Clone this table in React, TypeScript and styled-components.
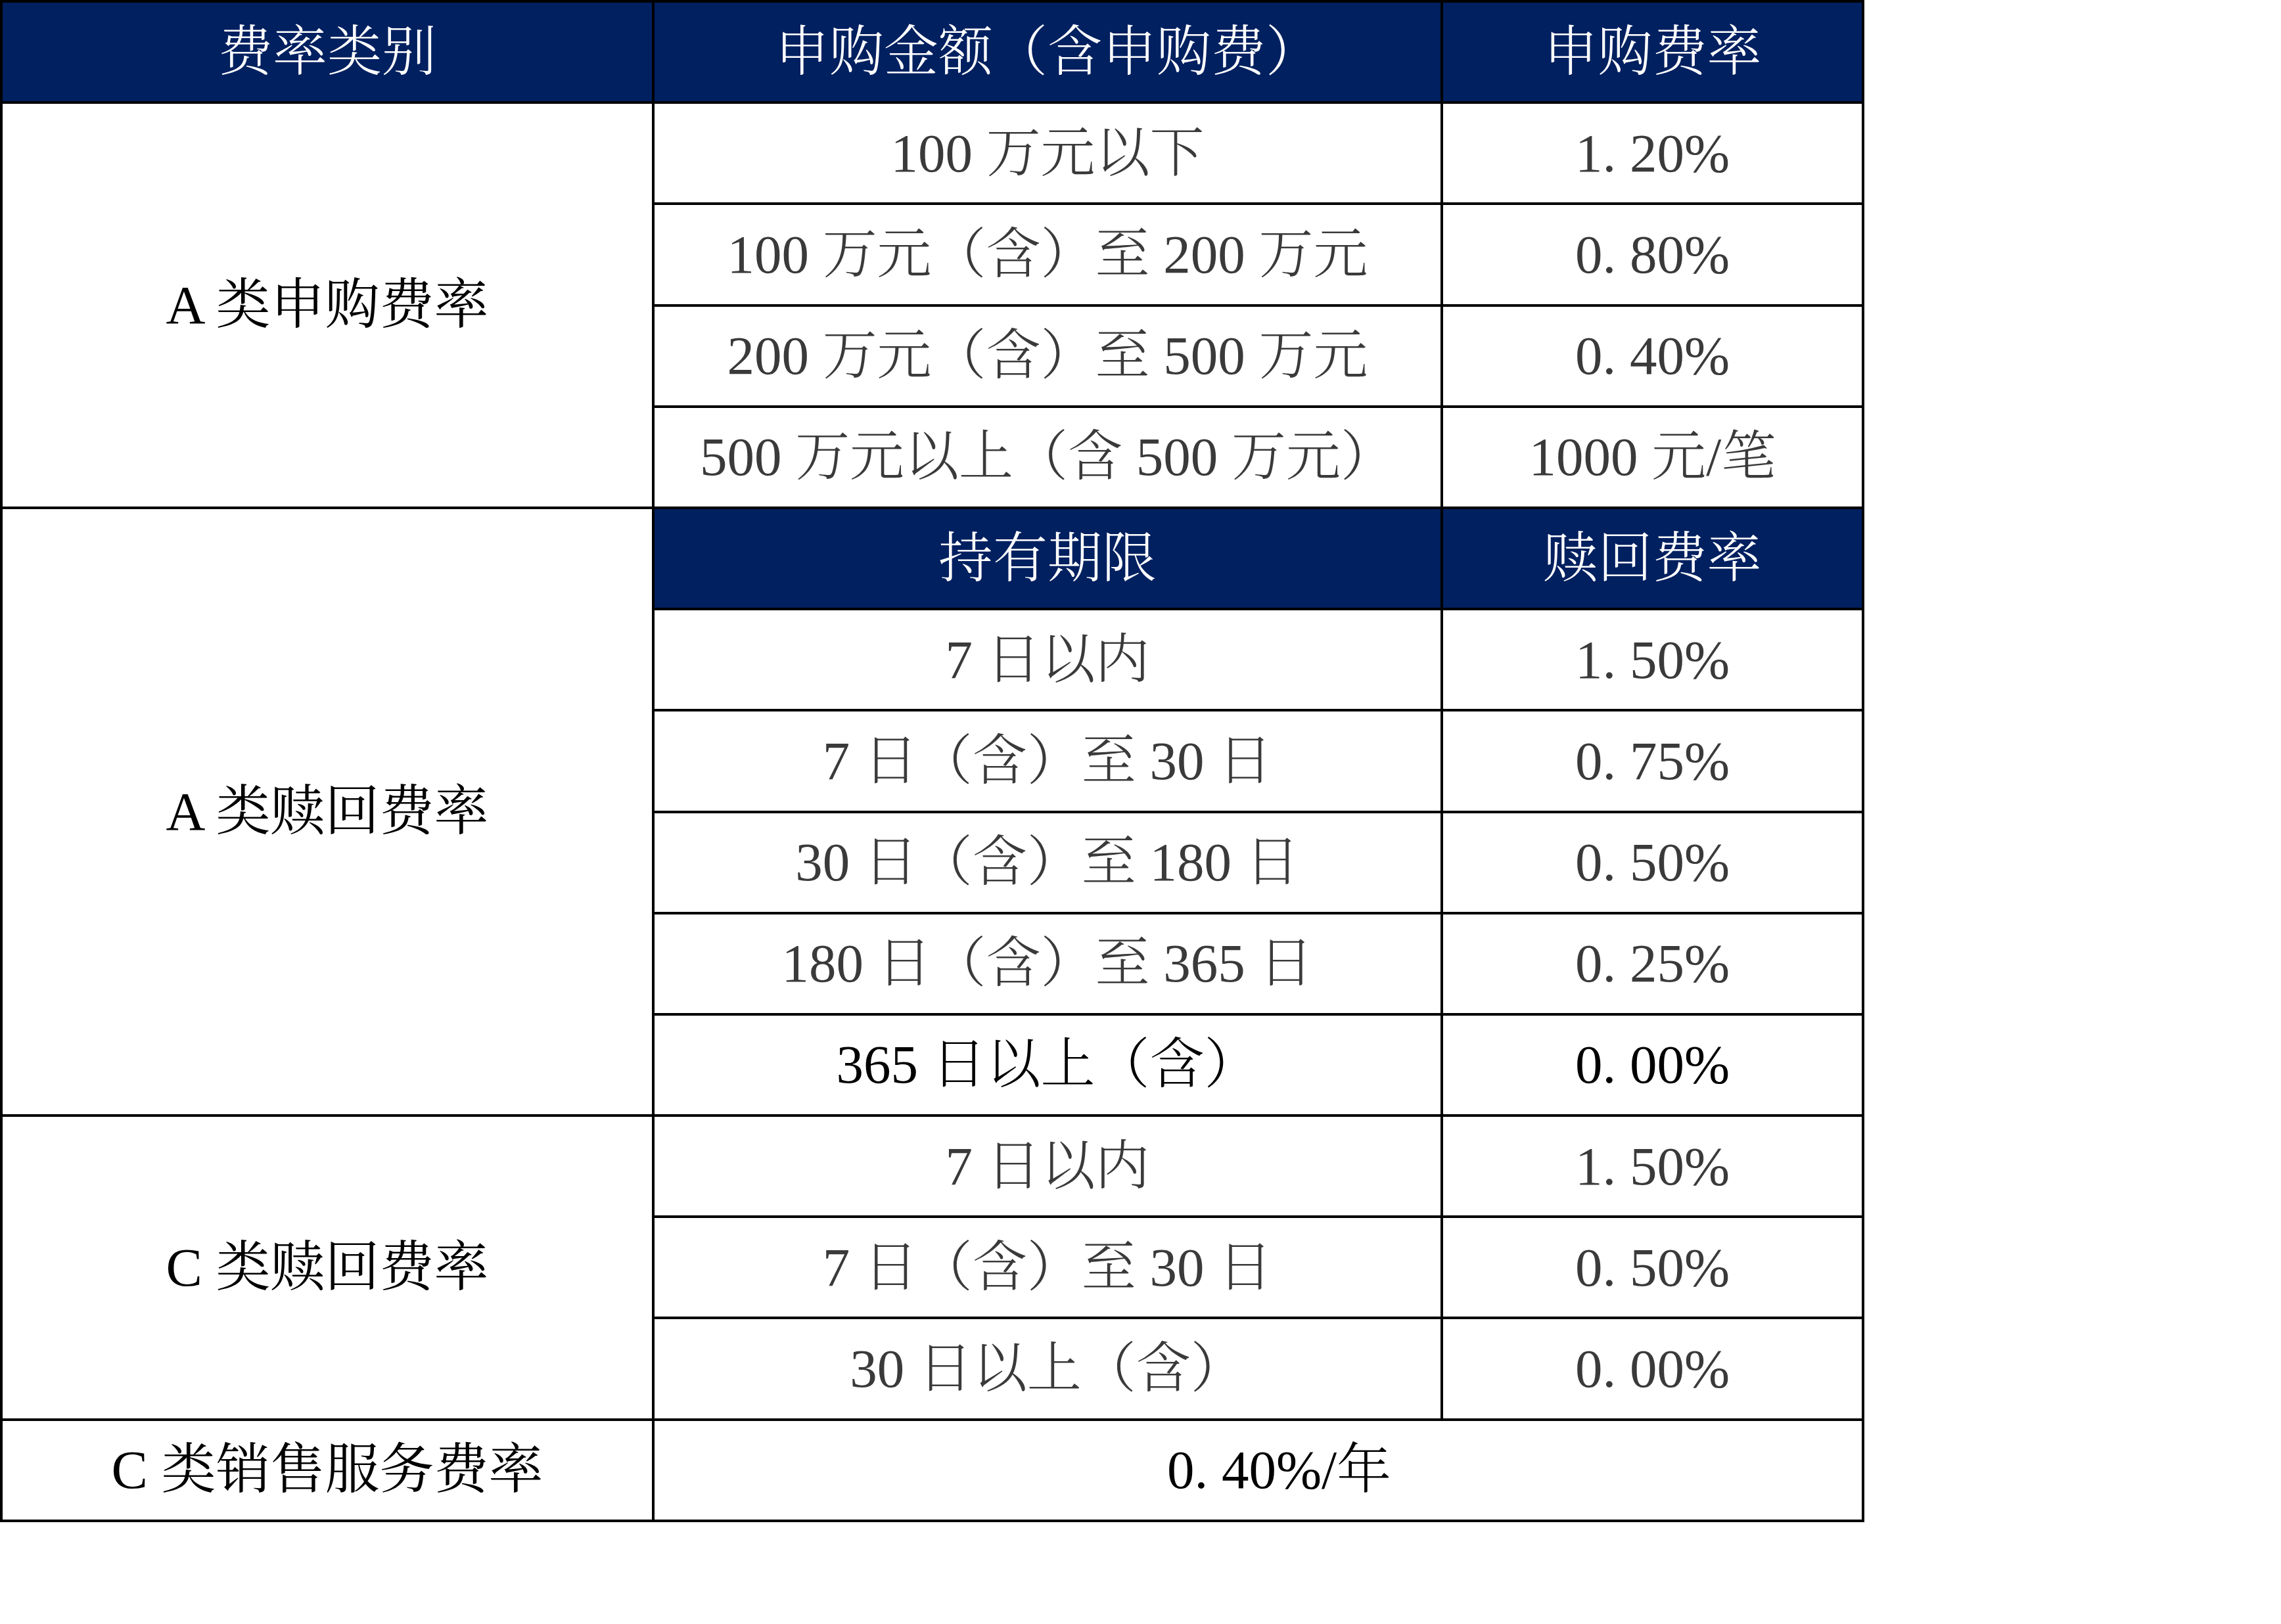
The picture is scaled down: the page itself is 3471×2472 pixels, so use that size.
import React from "react";
import styled, { createGlobalStyle } from "styled-components";

const GlobalStyle = createGlobalStyle`
  html, body {
    margin: 0;
    padding: 0;
    background: #fff;
  }
  body {
    font-family: "Liberation Serif", "Noto Serif CJK SC", "Noto Sans CJK SC", serif;
  }
`;

const Table = styled.div`
  display: grid;
  width: 2837px;
  grid-template-columns: 988px 1196px 637px;
  grid-template-rows: repeat(15, 150.2px);
  gap: 4px;
  padding: 4px;
  box-sizing: border-box;
  background: #000;
`;

const Cell = styled.div<{ $head?: boolean; $dark?: boolean; $col?: string; $row?: string }>`
  display: flex;
  align-items: center;
  justify-content: center;
  background: ${(p) => (p.$head ? "#002060" : "#fff")};
  color: ${(p) => (p.$head ? "#fff" : p.$dark ? "#000" : "#3a3a3a")};
  font-size: 83px;
  font-weight: 300;
  line-height: 1;
  white-space: pre;
  grid-column: ${(p) => p.$col ?? "auto"};
  grid-row: ${(p) => p.$row ?? "auto"};
`;

const Label = styled(Cell)`
  font-weight: 400;
  color: #000;
`;

const WideCell = styled(Cell)`
  padding-left: 64px;
`;

type Row = [string, string, boolean?];

const subscription: Row[] = [
  ["100 万元以下", "1. 20%"],
  ["100 万元（含）至 200 万元", "0. 80%"],
  ["200 万元（含）至 500 万元", "0. 40%"],
  ["500 万元以上（含 500 万元）", "1000 元/笔"],
];

const redeemA: Row[] = [
  ["7 日以内", "1. 50%"],
  ["7 日（含）至 30 日", "0. 75%"],
  ["30 日（含）至 180 日", "0. 50%"],
  ["180 日（含）至 365 日", "0. 25%"],
  ["365 日以上（含）", "0. 00%", true],
];

const redeemC: Row[] = [
  ["7 日以内", "1. 50%"],
  ["7 日（含）至 30 日", "0. 50%"],
  ["30 日以上（含）", "0. 00%"],
];

const renderRows = (rows: Row[]) =>
  rows.map(([range, rate, dark], i) => (
    <React.Fragment key={i}>
      <Cell $col="2" $dark={dark}>{range}</Cell>
      <Cell $col="3" $dark={dark}>{rate}</Cell>
    </React.Fragment>
  ));

const App = () => {
  return (
    <>
      <GlobalStyle />
      <Table>
        <Cell $head>费率类别</Cell>
        <Cell $head>申购金额（含申购费）</Cell>
        <Cell $head>申购费率</Cell>

        <Label $col="1" $row="2 / span 4">A 类申购费率</Label>
        {renderRows(subscription)}

        <Label $col="1" $row="6 / span 6">A 类赎回费率</Label>
        <Cell $head $col="2">持有期限</Cell>
        <Cell $head $col="3">赎回费率</Cell>
        {renderRows(redeemA)}

        <Label $col="1" $row="12 / span 3">C 类赎回费率</Label>
        {renderRows(redeemC)}

        <Label $col="1">C 类销售服务费率</Label>
        <WideCell $col="2 / span 2" $dark>0. 40%/年</WideCell>
      </Table>
    </>
  );
};

export default App;
